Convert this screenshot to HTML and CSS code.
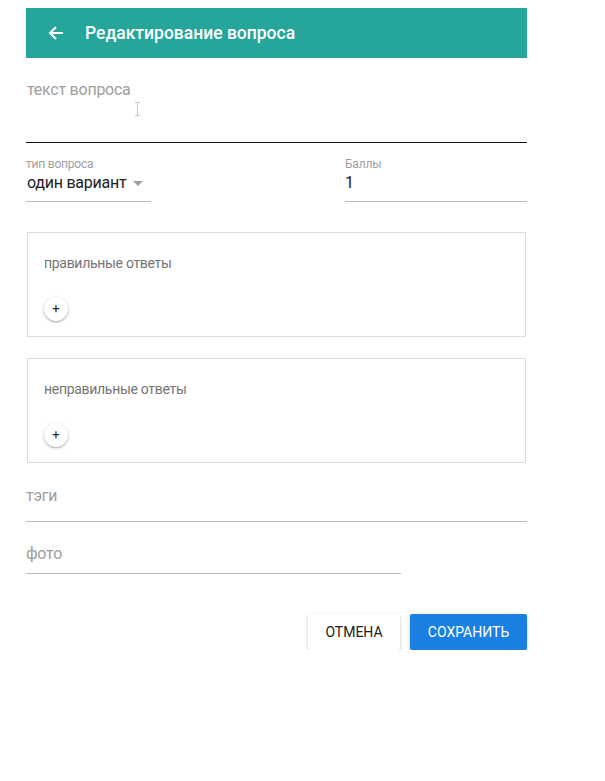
FILE: index.html
```html
<!DOCTYPE html>
<html lang="ru">
<head>
<meta charset="utf-8">
<title>Редактирование вопроса</title>
<link rel="stylesheet" href="styles.css">
</head>
<body>
<div class="page">
  <header class="appbar">
    <svg class="back" width="16" height="16" viewBox="0 0 16 16" aria-hidden="true">
      <path d="M15 8H2.5M8 2L2 8l6 6" fill="none" stroke="#fff" stroke-width="2"/>
    </svg>
    <h1 class="title">Редактирование вопроса</h1>
  </header>

  <div class="question">
    <span class="placeholder">текст вопроса</span>
    <svg class="ibeam" width="5" height="14" viewBox="0 0 5 14" aria-hidden="true">
      <path d="M0 0.5h5M2.5 0.5v13M0 13.5h5" fill="none" stroke="#c8c8c8" stroke-width="1"/>
    </svg>
  </div>

  <div class="row">
    <div class="field type">
      <div class="small-label">тип вопроса</div>
      <div class="value">один вариант <span class="caret"></span></div>
    </div>
    <div class="field points">
      <div class="small-label">Баллы</div>
      <div class="value">1</div>
    </div>
  </div>

  <section class="card">
    <div class="card-label">правильные ответы</div>
    <button class="fab">+</button>
  </section>

  <section class="card second">
    <div class="card-label">неправильные ответы</div>
    <button class="fab">+</button>
  </section>

  <div class="line-field tags"><span class="placeholder">тэги</span></div>
  <div class="line-field photo"><span class="placeholder">фото</span></div>

  <div class="actions">
    <button class="btn cancel">Отмена</button>
    <button class="btn save">Сохранить</button>
  </div>
</div>
</body>
</html>
```

FILE: styles.css
```css
* { box-sizing: border-box; }
html, body {
  margin: 0;
  padding: 0;
  background: #fff;
  font-family: Roboto, "Liberation Sans", Arial, sans-serif;
  color: #212121;
}
.page {
  width: 501px;
  margin-left: 26px;
  padding-top: 8px;
}
.appbar {
  height: 50px;
  background: #26a69a;
  display: flex;
  align-items: center;
  padding-left: 22px;
}
.back { display: block; margin-right: 21px; }
.title {
  margin: 0;
  font-size: 17.5px;
  font-weight: 500;
  color: #fff;
  line-height: 20px;
}
.question {
  position: relative;
  height: 85px;
  padding-top: 22px;
  border-bottom: 1px solid #111;
}
.placeholder {
  font-size: 16px;
  line-height: 20px;
  color: #9e9e9e;
  display: block;
  letter-spacing: -0.25px;
}
.question .placeholder { padding-left: 1px; }
.ibeam { position: absolute; left: 109px; top: 44px; }
.row {
  display: flex;
  justify-content: space-between;
}
.field {
  padding-top: 14px;
  padding-bottom: 8px;
  border-bottom: 1px solid #bdbdbd;
}
.field.type { width: 125px; }
.field.points { width: 182px; }
.small-label {
  font-size: 12px;
  line-height: 14px;
  color: #9e9e9e;
  letter-spacing: -0.2px;
}
.value {
  margin-top: 2px;
  font-size: 16px;
  line-height: 20px;
  color: #212121;
  display: flex;
  align-items: center;
  letter-spacing: -0.25px;
}
.field.type .value { padding-left: 1px; }
.caret {
  display: inline-block;
  margin-left: 7px;
  width: 0;
  height: 0;
  border-left: 5px solid transparent;
  border-right: 5px solid transparent;
  border-top: 5px solid #9e9e9e;
}
.card {
  margin-top: 30px;
  border: 1px solid #dcdcdc;
  padding: 20px 16px 15px 16px;
  margin-left: 1px;
  margin-right: 1px;
}
.card.second { margin-top: 21px; }
.card-label {
  font-size: 14px;
  line-height: 20px;
  color: #757575;
  letter-spacing: -0.3px;
}
.fab {
  display: flex;
  align-items: center;
  justify-content: center;
  margin-top: 24px;
  width: 24px;
  height: 24px;
  border-radius: 50%;
  border: none;
  background: #fff;
  box-shadow: 0 1px 3px rgba(0,0,0,0.28), 0 1px 1px rgba(0,0,0,0.12);
  font-family: Roboto, "Liberation Sans", sans-serif;
  font-size: 13px;
  line-height: 1;
  color: #222;
  padding: 0 0 1px 0;
}
.line-field {
  border-bottom: 1px solid #bdbdbd;
}
.line-field.tags {
  margin-top: 23px;
  padding-bottom: 15px;
}
.line-field.photo {
  width: 375px;
  margin-top: 22px;
  padding-bottom: 9px;
}
.actions {
  display: flex;
  justify-content: flex-end;
  gap: 10px;
  margin-top: 40px;
}
.btn {
  height: 36px;
  border: none;
  border-radius: 2px;
  font-family: Roboto, "Liberation Sans", sans-serif;
  font-size: 14px;
  text-transform: uppercase;
  padding: 0 16px;
  box-shadow: 0 2px 2px rgba(0,0,0,0.14), 0 1px 4px rgba(0,0,0,0.14);
}
.btn.cancel {
  width: 92px;
  background: #fff;
  color: #212121;
}
.btn.save {
  width: 117px;
  background: #1a80e2;
  color: #fff;
}
```
